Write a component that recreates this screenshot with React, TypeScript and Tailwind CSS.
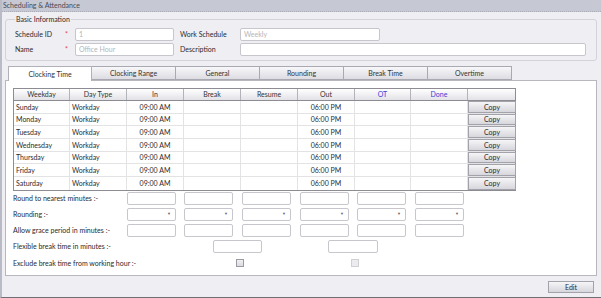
import React from "react";

const days = ["Sunday", "Monday", "Tuesday", "Wednesday", "Thursday", "Friday", "Saturday"];
const colW = [56, 57, 57, 57, 57, 57, 56, 57, 48];
const heads = ["Weekday", "Day Type", "In", "Break", "Resume", "Out", "OT", "Done", ""];
const tabs = ["Clocking Time", "Clocking Range", "General", "Rounding", "Break Time", "Overtime"];
const inputX = [127, 184, 242, 300, 357, 415];

function Box({ w, select }: { w: number; select?: boolean }) {
  return (
    <div
      className="h-[13px] bg-white border border-[#c6c6cc] rounded-[2px] flex items-center justify-end pr-[4px] shrink-0"
      style={{ width: w }}
    >
      {select && <span className="text-[4px] text-[#666] leading-none">▼</span>}
    </div>
  );
}

function FormRow({ label, select }: { label: string; select?: boolean }) {
  return (
    <div className="flex items-center h-[13px]">
      <div className="w-[121px] shrink-0 pl-[7px] whitespace-nowrap">{label}</div>
      {inputX.map((x, i) => (
        <div key={i} style={{ marginLeft: i === 0 ? 0 : x - inputX[i - 1] - 49 }}>
          <Box w={49} select={select} />
        </div>
      ))}
    </div>
  );
}

export default function App() {
  return (
    <div
      className="w-[601px] h-[298px] bg-[#efeef3] overflow-hidden border-l-2 border-b border-l-[#b9bbc6] border-b-[#6e6e74] text-[7px] text-[#2a2a2e] flex flex-col"
      style={{ fontFamily: 'Lato, "Open Sans", sans-serif' }}
    >
      {/* title bar */}
      <div className="h-[12px] bg-[#c6c9d4] border-b border-dotted border-[#a9acb8] pl-[1px] flex items-center text-[#4a4a52] shrink-0">
        Scheduling &amp; Attendance
      </div>

      {/* Basic Information */}
      <fieldset className="mx-[3px] mr-[4px] mt-[2px] border border-[#d2d2d8] rounded-[3px] h-[47px] px-[9px] pt-[3px] shrink-0">
        <legend className="px-[1px]">Basic Information</legend>
        <div className="flex items-center h-[13px]">
          <div className="w-[50px]">Schedule ID</div>
          <div className="w-[10px] text-[#e0404a]">*</div>
          <div className="w-[99px] h-[13px] bg-white border border-[#c6c6cc] rounded-[2px] pl-[3px] text-[#b4b4b8] flex items-center">1</div>
          <div className="w-[66px] pl-[6px]">Work Schedule</div>
          <div className="w-[140px] h-[13px] bg-white border border-[#c6c6cc] rounded-[2px] pl-[3px] text-[#b4b4b8] flex items-center">Weekly</div>
        </div>
        <div className="flex items-center h-[13px] mt-[2px]">
          <div className="w-[50px]">Name</div>
          <div className="w-[10px] text-[#e0404a]">*</div>
          <div className="w-[99px] h-[13px] bg-white border border-[#c6c6cc] rounded-[2px] pl-[3px] text-[#b4b4b8] flex items-center">Office Hour</div>
          <div className="w-[66px] pl-[6px]">Description</div>
          <div className="w-[346px] h-[13px] bg-white border border-[#c6c6cc] rounded-[2px]"></div>
        </div>
      </fieldset>

      {/* tabs */}
      <div className="flex pl-[6px] mt-[5px] h-[14px] shrink-0 relative z-10">
        {tabs.map((t, i) => (
          <div
            key={t}
            className={
              i === 0
                ? "w-[84px] h-[15px] bg-white border border-b-0 border-[#b0b0b8] flex items-center justify-center text-[#333]"
                : "w-[84px] h-[14px] bg-gradient-to-b from-[#f8f8fa] to-[#dcdce2] border border-l-0 border-[#a9a9b2] flex items-center justify-center text-[#333]"
            }
          >
            {t}
          </div>
        ))}
      </div>

      {/* panel */}
      <div className="mx-[3px] w-[592px] h-[196px] bg-white border border-[#b7b7be] shrink-0 pt-[7px] flex flex-col">
        <div className="ml-[7px] w-[503px] border border-[#8c8c92]">
          <div className="flex h-[12px] bg-gradient-to-b from-white to-[#e2e2e7] border-b border-[#8c8c92]">
            {heads.map((h, i) => (
              <div
                key={i}
                className={
                  "flex items-center justify-center shrink-0 " +
                  (i < 8 ? "border-r border-[#b3b3ba] " : "") +
                  (i === 6 || i === 7 ? "text-[#3d3dd8]" : "text-[#333]")
                }
                style={{ width: colW[i] }}
              >
                {h}
              </div>
            ))}
          </div>
          {days.map((d, r) => (
            <div key={d} className={"flex h-[12.7px] " + (r < 6 ? "border-b border-[#e3e3e6]" : "")}>
              {colW.map((w, i) => (
                <div
                  key={i}
                  className={
                    "flex items-center shrink-0 " +
                    (i < 8 ? "border-r border-[#e3e3e6] " : "") +
                    (i === 0 || i === 1 ? "pl-[2px]" : "justify-center")
                  }
                  style={{ width: w }}
                >
                  {i === 0 && d}
                  {i === 1 && "Workday"}
                  {i === 2 && "09:00 AM"}
                  {i === 5 && "06:00 PM"}
                  {i === 8 && (
                    <div className="w-full h-full bg-gradient-to-b from-[#f6f6f8] via-[#e6e6ea] to-[#d6d6dc] border border-[#a2a2aa] flex items-center justify-center">
                      Copy
                    </div>
                  )}
                </div>
              ))}
            </div>
          ))}
        </div>

        <div className="flex flex-col gap-[3px] mt-[1px]">
          <FormRow label="Round to nearest minutes :-" />
          <FormRow label="Rounding :-" select />
          <FormRow label="Allow grace period in minutes :-" />
          <div className="flex items-center h-[13px]">
            <div className="w-[207px] shrink-0 pl-[7px]">Flexible break time in minutes :-</div>
            <Box w={49} />
            <div className="w-[66px] shrink-0"></div>
            <Box w={50} />
          </div>
          <div className="flex items-center h-[13px] mt-[1px]">
            <div className="w-[230px] shrink-0 pl-[7px]">Exclude break time from working hour :-</div>
            <div className="w-[8px] h-[8px] border border-[#9a9aa2] bg-gradient-to-b from-[#f0f0f2] to-[#dcdce0] shrink-0"></div>
            <div className="w-[107px] shrink-0"></div>
            <div className="w-[8px] h-[8px] border border-[#cfcfd4] bg-[#ececef] shrink-0"></div>
          </div>
        </div>
      </div>

      {/* bottom bar */}
      <div className="flex justify-end pr-[7px] mt-[5px]">
        <div className="w-[46px] h-[12px] bg-gradient-to-b from-[#f6f6f8] via-[#e6e6ea] to-[#d6d6dc] border border-[#a2a2aa] flex items-center justify-center">
          Edit
        </div>
      </div>
    </div>
  );
}
